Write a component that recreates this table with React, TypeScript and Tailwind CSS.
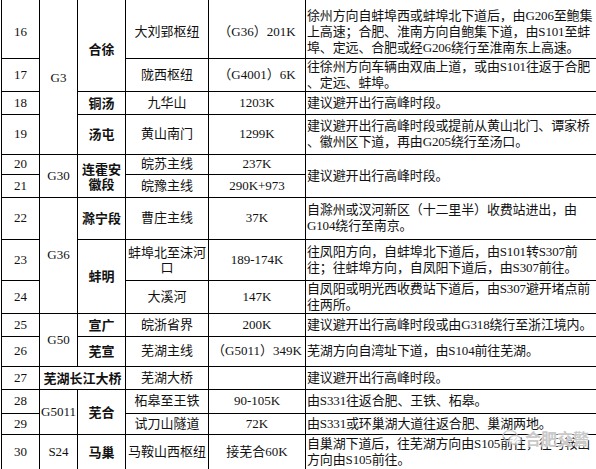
import React from "react";

const td = "border border-black p-0 text-center align-middle";
const num = td + " text-[13px]";
const road = td + " text-[13px]";
const seg = td + " text-[13px] font-bold font-['Noto_Sans_CJK_SC',sans-serif]";
const place = td + " text-[13px]";
const pile = td + " text-[13px] whitespace-nowrap";
const desc = "border border-black p-0 pl-[1px] text-left align-middle text-[13px] tracking-[-0.15px] whitespace-nowrap";

function L({ lines }: { lines: string[] }) {
  return (
    <>
      {lines.map((l, i) => (
        <div key={i}>{l}</div>
      ))}
    </>
  );
}

export default function App() {
  return (
    <div className="relative w-[596px] h-[469px] overflow-hidden bg-white text-[#111] font-['Liberation_Serif','Noto_Sans_CJK_SC',serif] leading-[16px]">
      <table className="ml-[1px] table-fixed border-collapse w-[620px] border-t-0">
        <colgroup>
          <col className="w-[38px]" />
          <col className="w-[38px]" />
          <col className="w-[48px]" />
          <col className="w-[83px]" />
          <col className="w-[97px]" />
          <col className="w-[316px]" />
        </colgroup>
        <tbody>
          <tr className="h-[58px]">
            <td className={num + " border-t-0 pt-[6px]"}>16</td>
            <td className={road + " border-t-0 pt-[3px]"} rowSpan={4}>G3</td>
            <td className={seg + " border-t-0 pt-[7px]"} rowSpan={2}>合徐</td>
            <td className={place + " border-t-0 pt-[6px]"}>大刘郢枢纽</td>
            <td className={pile + " border-t-0 pt-[6px]"}>（G36）201K</td>
            <td className={desc + " border-t-0 pt-[7px]"}>
              <L lines={["徐州方向自蚌埠西或蚌埠北下道后，由G206至鲍集", "上高速；合肥、淮南方向自鲍集下道，由S101至蚌", "埠、定远、合肥或经G206绕行至淮南东上高速。"]} />
            </td>
          </tr>
          <tr className="h-[30px]">
            <td className={num}>17</td>
            <td className={place}>陇西枢纽</td>
            <td className={pile}>（G4001）6K</td>
            <td className={desc}>
              <L lines={["往徐州方向车辆由双庙上道，或由S101往返于合肥", "、定远、蚌埠。"]} />
            </td>
          </tr>
          <tr className="h-[23px]">
            <td className={num}>18</td>
            <td className={seg}>铜汤</td>
            <td className={place}>九华山</td>
            <td className={pile}>1203K</td>
            <td className={desc}>建议避开出行高峰时段。</td>
          </tr>
          <tr className="h-[40px]">
            <td className={num}>19</td>
            <td className={seg}>汤屯</td>
            <td className={place}>黄山南门</td>
            <td className={pile}>1299K</td>
            <td className={desc}>
              <L lines={["建议避开出行高峰时段或提前从黄山北门、谭家桥", "、徽州区下道，再由G205绕行至汤口。"]} />
            </td>
          </tr>
          <tr className="h-[20px]">
            <td className={num}>20</td>
            <td className={road} rowSpan={2}>G30</td>
            <td className={seg + " leading-[15px]"} rowSpan={2}>
              <L lines={["连霍安", "徽段"]} />
            </td>
            <td className={place}>皖苏主线</td>
            <td className={pile}>237K</td>
            <td className={desc} rowSpan={2}>建议避开出行高峰时段。</td>
          </tr>
          <tr className="h-[23px]">
            <td className={num}>21</td>
            <td className={place}>皖豫主线</td>
            <td className={pile}>290K+973</td>
          </tr>
          <tr className="h-[42px]">
            <td className={num}>22</td>
            <td className={road} rowSpan={3}>G36</td>
            <td className={seg}>滁宁段</td>
            <td className={place}>曹庄主线</td>
            <td className={pile}>37K</td>
            <td className={desc}>
              <L lines={["自滁州或汊河新区（十二里半）收费站进出，由", "G104绕行至南京。"]} />
            </td>
          </tr>
          <tr className="h-[41px]">
            <td className={num}>23</td>
            <td className={seg} rowSpan={2}>蚌明</td>
            <td className={place + " leading-[15px]"}>
              <L lines={["蚌埠北至沫河", "口"]} />
            </td>
            <td className={pile}>189-174K</td>
            <td className={desc}>
              <L lines={["往凤阳方向，自蚌埠北下道后，由S101转S307前", "往；往蚌埠方向，自凤阳下道后，由S307前往。"]} />
            </td>
          </tr>
          <tr className="h-[33px]">
            <td className={num}>24</td>
            <td className={place}>大溪河</td>
            <td className={pile}>147K</td>
            <td className={desc}>
              <L lines={["自凤阳或明光西收费站下道后，由S307避开堵点前", "往两所。"]} />
            </td>
          </tr>
          <tr className="h-[23px]">
            <td className={num}>25</td>
            <td className={road} rowSpan={2}>G50</td>
            <td className={seg}>宣广</td>
            <td className={place}>皖浙省界</td>
            <td className={pile}>200K</td>
            <td className={desc}>建议避开出行高峰时段或由G318绕行至浙江境内。</td>
          </tr>
          <tr className="h-[30px]">
            <td className={num}>26</td>
            <td className={seg}>芜宣</td>
            <td className={place}>芜湖主线</td>
            <td className={pile}>（G5011）349K</td>
            <td className={desc}>芜湖方向自湾址下道，由S104前往芜湖。</td>
          </tr>
          <tr className="h-[23px]">
            <td className={num}>27</td>
            <td className={seg + " whitespace-nowrap"} colSpan={2}>芜湖长江大桥</td>
            <td className={place}>芜湖大桥</td>
            <td className={pile}></td>
            <td className={desc}>建议避开出行高峰时段。</td>
          </tr>
          <tr className="h-[24px]">
            <td className={num}>28</td>
            <td className={road} rowSpan={2}>G5011</td>
            <td className={seg} rowSpan={2}>芜合</td>
            <td className={place}>柘皋至王铁</td>
            <td className={pile}>90-105K</td>
            <td className={desc}>由S331往返合肥、王铁、柘皋。</td>
          </tr>
          <tr className="h-[21px]">
            <td className={num}>29</td>
            <td className={place}>试刀山隧道</td>
            <td className={pile}>72K</td>
            <td className={desc}>由S331或环巢湖大道往返合肥、巢湖两地。</td>
          </tr>
          <tr className="h-[36px]">
            <td className={num}>30</td>
            <td className={road}>S24</td>
            <td className={seg}>马巢</td>
            <td className={place + " whitespace-nowrap"}>马鞍山西枢纽</td>
            <td className={pile}>接芜合60K</td>
            <td className={desc}>
              <L lines={["自巢湖下道后，往芜湖方向由S105前往，往马鞍山", "方向由S105前往。"]} />
            </td>
          </tr>
        </tbody>
      </table>
      <div className="absolute left-[502px] top-[428px] flex items-center gap-[3px] text-[#c9c9c9] [text-shadow:0_0_2px_white,0_0_2px_white]">
        <svg width="20" height="18" viewBox="0 0 20 18" className="opacity-80">
          <ellipse cx="8" cy="7" rx="7" ry="5.5" fill="none" stroke="#c4c4c4" strokeWidth="1.5" />
          <ellipse cx="13" cy="11" rx="6" ry="4.5" fill="white" stroke="#c4c4c4" strokeWidth="1.5" />
        </svg>
        <span className="text-[16px] font-bold font-['Noto_Sans_CJK_SC',sans-serif] leading-[20px]">合肥交警</span>
      </div>
    </div>
  );
}
